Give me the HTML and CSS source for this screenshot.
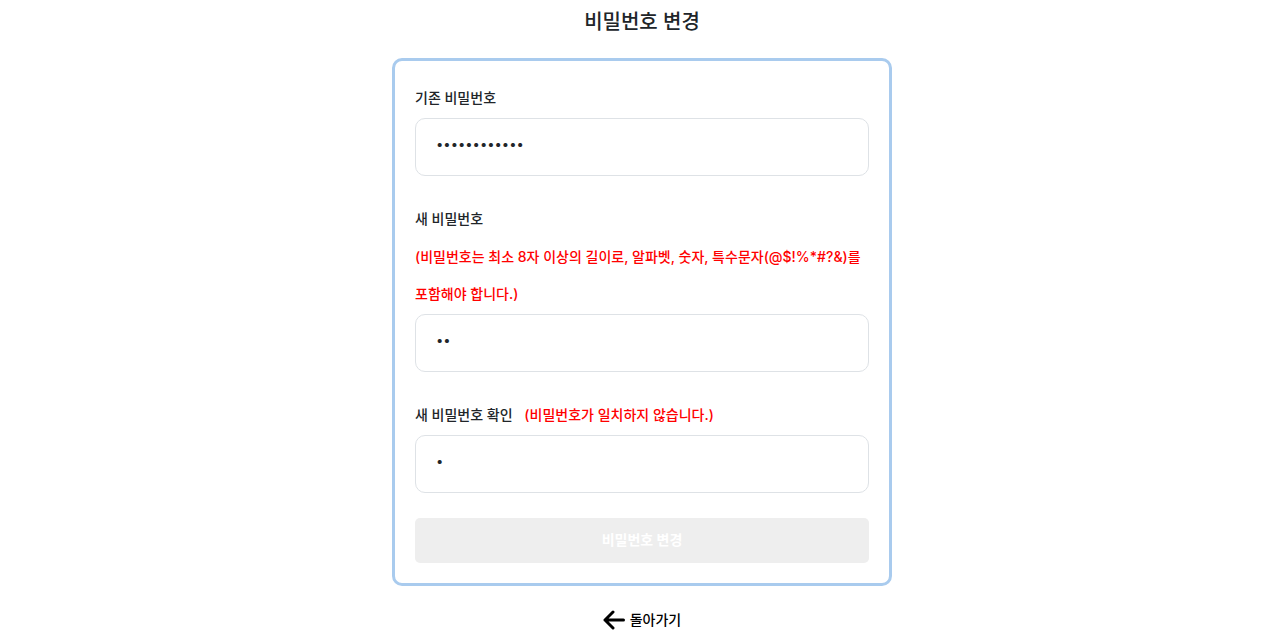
FILE: index.html
```html
<!DOCTYPE html>
<html lang="ko">
<head>
<meta charset="utf-8">
<meta name="viewport" content="width=device-width, initial-scale=1">
<title>비밀번호 변경</title>
<link rel="stylesheet" href="styles.css">
</head>
<body>
<main class="page">
  <h1 class="title">비밀번호 변경</h1>
  <form class="card">
    <div class="field">
      <label class="label" for="current">기존 비밀번호</label>
      <input class="input" id="current" type="password" value="abcdefgh123!">
    </div>
    <div class="field">
      <label class="label" for="next">새 비밀번호
        <span class="hint">(비밀번호는 최소 8자 이상의 길이로, 알파벳, 숫자, 특수문자(@$!%*#?&amp;)를 포함해야 합니다.)</span>
      </label>
      <input class="input" id="next" type="password" value="ab">
    </div>
    <div class="field">
      <label class="label" for="confirm">새 비밀번호 확인 <span class="error">(비밀번호가 일치하지 않습니다.)</span></label>
      <input class="input" id="confirm" type="password" value="a">
    </div>
    <button class="submit" type="submit" disabled>비밀번호 변경</button>
  </form>
  <a class="back" href="#">
    <svg class="arrow" viewBox="0 0 22 20" aria-hidden="true"><path d="M10 2 2 10l8 8M2 10h18.5"/></svg>
    <span>돌아가기</span>
  </a>
</main>
</body>
</html>
```
FILE: styles.css
```css
* { box-sizing: border-box; }

body {
  margin: 0;
  background: #fff;
  color: #212529;
  font-family: Inter, "Noto Sans CJK KR", sans-serif;
  font-size: 14px;
  font-weight: 500;
  word-break: keep-all;
}

.page {
  display: flex;
  flex-direction: column;
  align-items: center;
  padding-left: 2px;
}

.title {
  margin: 0 0 14px;
  font-size: 20px;
  font-weight: 500;
  line-height: 44px;
}

.card {
  width: 100%;
  max-width: 500px;
  padding: 18px 20px 20px;
  border: 3px solid #a9cbee;
  border-radius: 10px;
}

.field + .field { margin-top: 24px; }

.label {
  display: block;
  padding-bottom: 2px;
  line-height: 37px;
}

.hint {
  display: block;
  margin-top: 1px;
  color: #f00;
}

.error {
  margin-left: 8px;
  color: #f00;
}

.input {
  display: block;
  width: 100%;
  height: 58px;
  padding: 0 20px 6px;
  border: 1px solid #dee2e6;
  border-radius: 10px;
  background: #fff;
  color: #212529;
  font: inherit;
  font-size: 13px;
  font-weight: 400;
}

.submit {
  display: block;
  width: 100%;
  height: 45px;
  margin-top: 25px;
  padding: 0 0 4px;
  border: 0;
  border-radius: 5px;
  background: #eee;
  color: #fff;
  font: inherit;
  font-weight: 700;
}

.back {
  display: flex;
  align-items: center;
  gap: 5px;
  margin-top: 18px;
  color: #000;
  line-height: 32px;
  text-decoration: none;
}

.arrow {
  width: 22px;
  height: 20px;
  fill: none;
  stroke: currentColor;
  stroke-width: 3;
  stroke-linecap: round;
  stroke-linejoin: round;
}
```
